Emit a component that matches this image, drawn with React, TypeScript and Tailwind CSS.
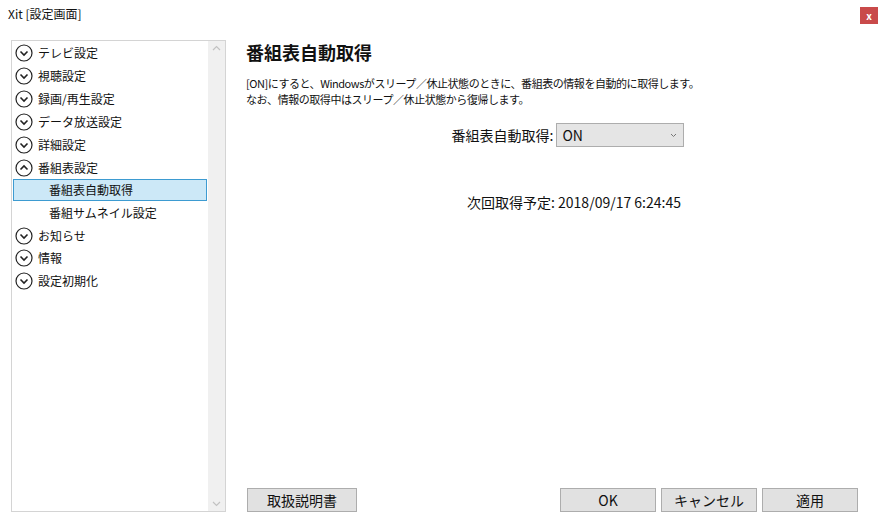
import type { ReactNode } from "react";

const FONT = { fontFamily: '"Noto Sans CJK JP", "Noto Sans", sans-serif' };

function CircleChevron({ up }: { up?: boolean }) {
  return (
    <svg width="18" height="18" viewBox="0 0 18 18" className="shrink-0">
      <circle cx="9" cy="9" r="8" fill="none" stroke="#222" strokeWidth="1.2" />
      {up ? (
        <path d="M5.5 10.5 L9 7 L12.5 10.5" fill="none" stroke="#222" strokeWidth="1.6" />
      ) : (
        <path d="M5.5 7.5 L9 11 L12.5 7.5" fill="none" stroke="#222" strokeWidth="1.6" />
      )}
    </svg>
  );
}

function TreeRow({ children, up, h = "h-[23px]" }: { children: ReactNode; up?: boolean; h?: string }) {
  return (
    <div className={`${h} flex items-center gap-[5px] pl-[2px] text-[12px] text-[#111]`}>
      <CircleChevron up={up} />
      <span>{children}</span>
    </div>
  );
}

function Btn({ children, w = "w-[96px]" }: { children: ReactNode; w?: string }) {
  return (
    <div
      className={`${w} h-[24px] flex items-center justify-center bg-[#e1e1e1] border border-[#adadad] text-[14px] text-[#111]`}
    >
      {children}
    </div>
  );
}

export default function App() {
  return (
    <div className="w-[880px] h-[521px] bg-white flex flex-col overflow-hidden" style={FONT}>
      {/* title bar */}
      <div className="h-[30px] flex items-start justify-between">
        <div className="pl-[8px] pt-[5px] text-[12px] text-[#111]">Xit [設定画面]</div>
        <div className="mt-[7px] mr-[2px] w-[18px] h-[17px] bg-[#c94a4a] text-white text-[10px] font-bold flex items-center justify-center leading-none">
          x
        </div>
      </div>

      <div className="flex flex-1 pt-[10px] pb-[9px]">
        {/* left tree */}
        <div className="ml-[11px] w-[215px] border border-[#d4d4d4] flex">
          <div className="flex-1 pl-[1px]">
            <TreeRow>テレビ設定</TreeRow>
            <TreeRow>視聴設定</TreeRow>
            <TreeRow>録画/再生設定</TreeRow>
            <TreeRow>データ放送設定</TreeRow>
            <TreeRow>詳細設定</TreeRow>
            <TreeRow up>番組表設定</TreeRow>
            <div className="h-[22px] mr-[1px] flex items-center pl-[35px] bg-[#cce8f7] border border-[#3d9bd1] text-[12px] text-[#111]">
              番組表自動取得
            </div>
            <div className="h-[24px] flex items-center pl-[36px] text-[12px] text-[#111]">番組サムネイル設定</div>
            <TreeRow h="h-[22px]">お知らせ</TreeRow>
            <TreeRow h="h-[22px]">情報</TreeRow>
            <TreeRow>設定初期化</TreeRow>
          </div>
          <div className="w-[17px] bg-[#f0f0f0] flex flex-col justify-between items-center py-[4px]">
            <svg width="9" height="6" viewBox="0 0 9 6">
              <path d="M1 5 L4.5 1.5 L8 5" fill="none" stroke="#c2c2c2" strokeWidth="1.2" />
            </svg>
            <svg width="9" height="6" viewBox="0 0 9 6">
              <path d="M1 1 L4.5 4.5 L8 1" fill="none" stroke="#c2c2c2" strokeWidth="1.2" />
            </svg>
          </div>
        </div>

        {/* right content */}
        <div className="flex-1 flex flex-col pl-[20px] pr-[22px]">
          <div className="text-[18px] font-bold text-[#111] leading-[24px]">番組表自動取得</div>
          <div className="mt-[11px] text-[11px] tracking-[-0.45px] leading-[16px] text-[#111]">
            <div>[ON]にすると、Windowsがスリープ／休止状態のときに、番組表の情報を自動的に取得します。</div>
            <div>なお、情報の取得中はスリープ／休止状態から復帰します。</div>
          </div>
          <div className="mt-[16px] flex items-center justify-center gap-[3px] pl-[32px]">
            <span className="text-[14px] text-[#111]">番組表自動取得:</span>
            <div className="w-[128px] h-[24px] bg-[#e5e5e5] border border-[#adadad] flex items-center justify-between pl-[5px] pr-[6px]">
              <span className="text-[14px] text-[#111]">ON</span>
              <svg width="7" height="5" viewBox="0 0 7 5">
                <path d="M1 1 L3.5 3.5 L6 1" fill="none" stroke="#777" strokeWidth="1" />
              </svg>
            </div>
          </div>
          <div className="mt-[45px] text-center text-[14px] text-[#111] pl-[44px]">次回取得予定: 2018/09/17 6:24:45</div>

          <div className="mt-auto flex items-end justify-between pl-[1px]">
            <Btn w="w-[110px]">取扱説明書</Btn>
            <div className="flex gap-[5px]">
              <Btn>OK</Btn>
              <Btn>キャンセル</Btn>
              <Btn>適用</Btn>
            </div>
          </div>
        </div>
      </div>
    </div>
  );
}
